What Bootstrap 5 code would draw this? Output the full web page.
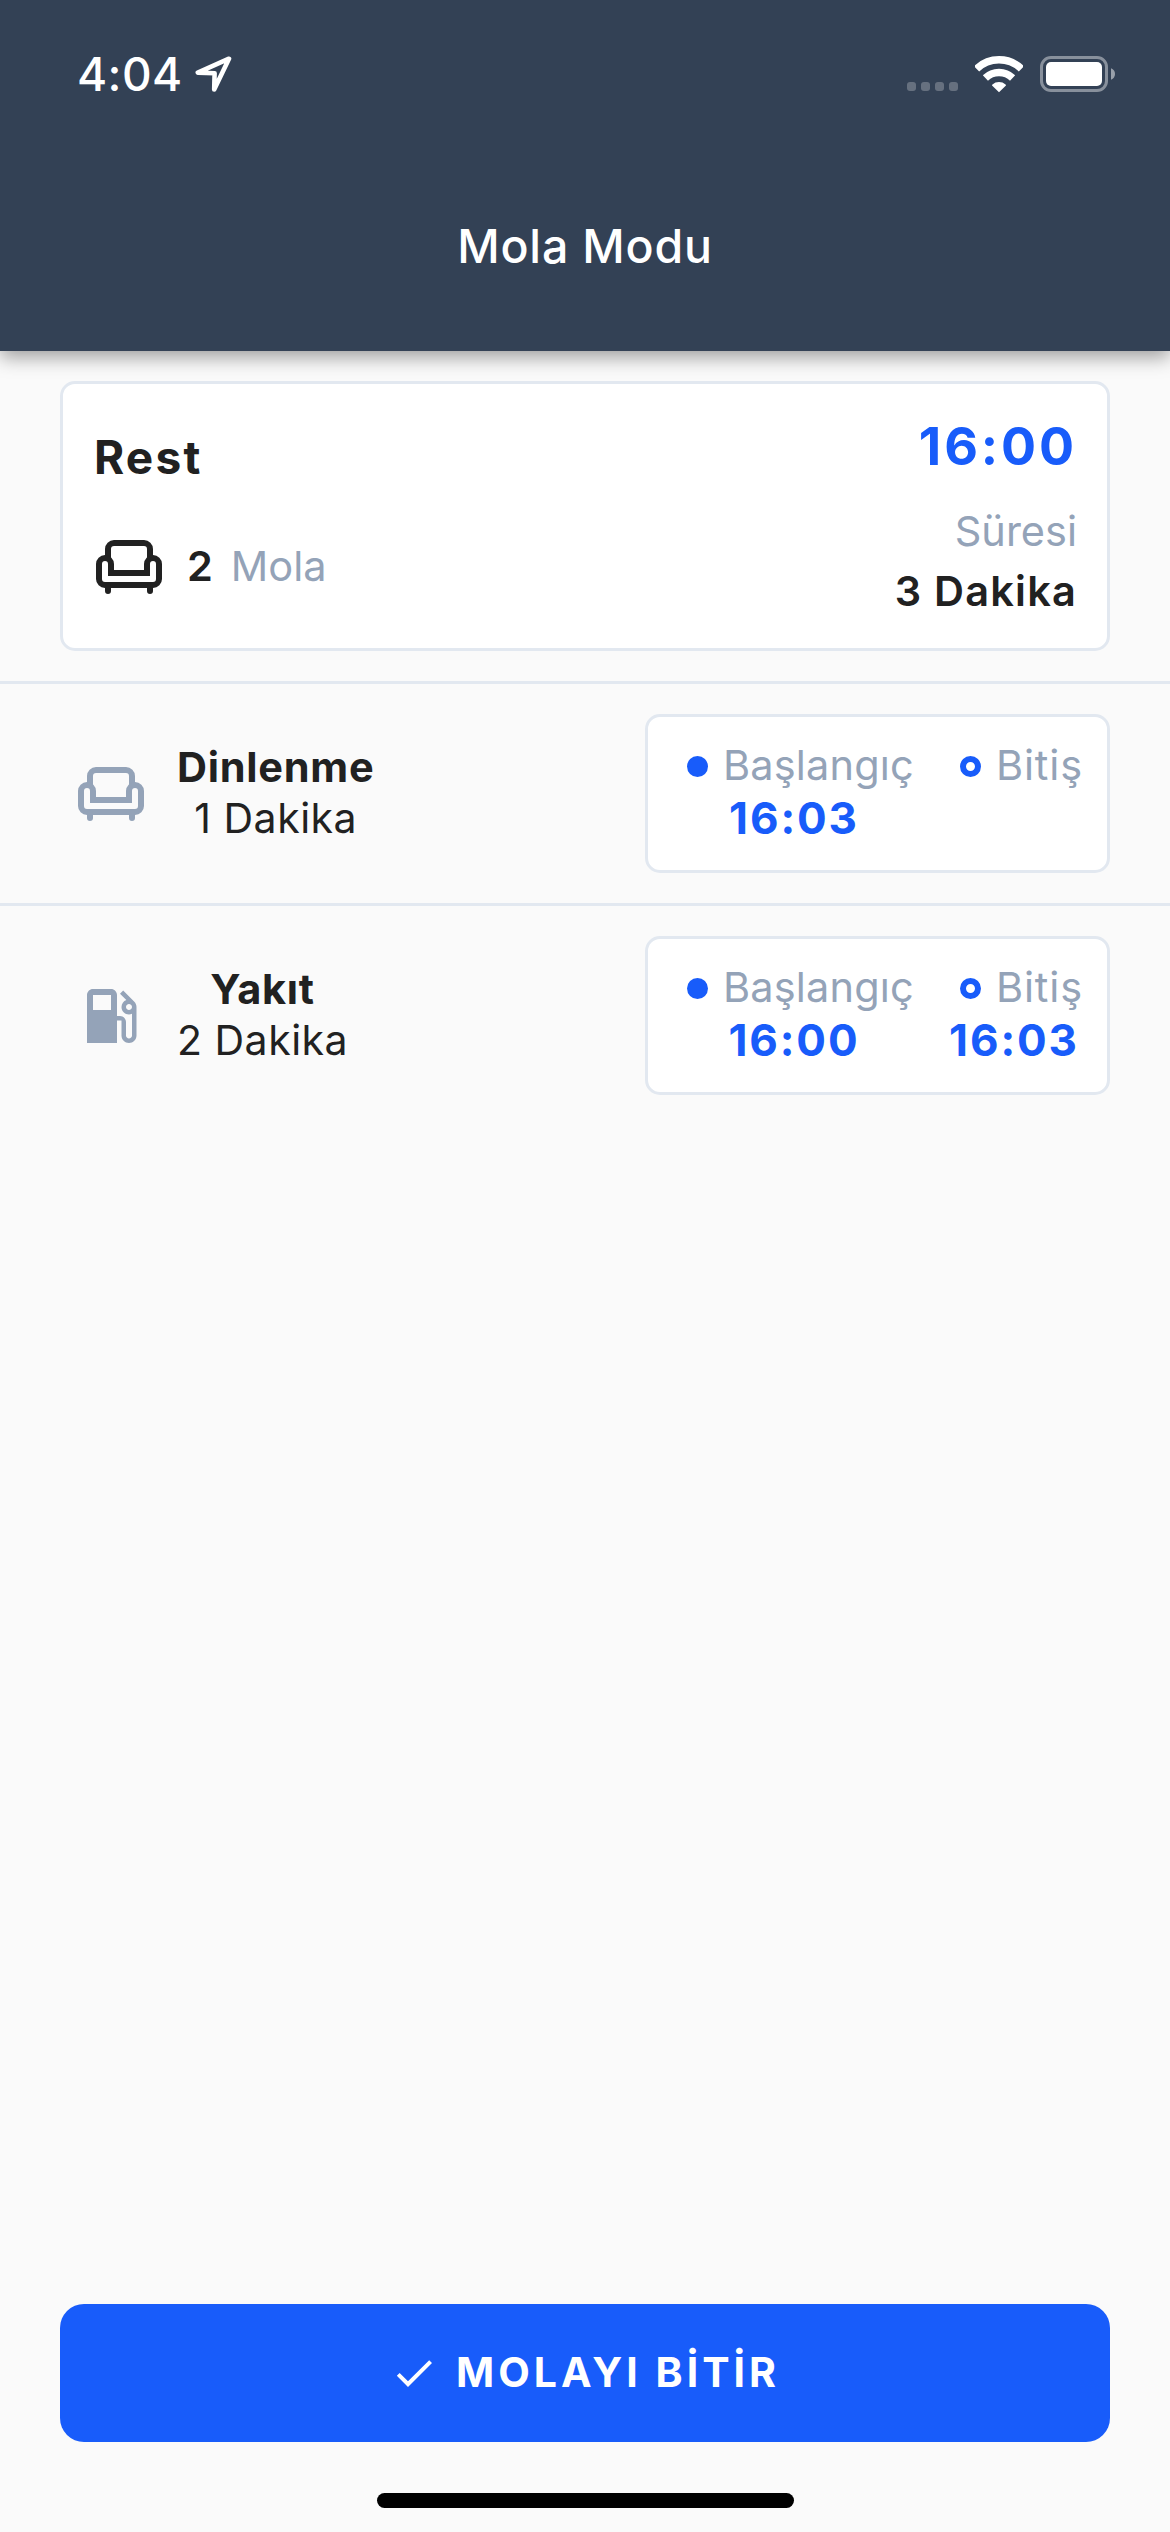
<!DOCTYPE html>
<html lang="tr">
<head>
<meta charset="utf-8">
<meta name="viewport" content="width=device-width, initial-scale=1">
<title>Mola Modu</title>
<link href="https://cdn.jsdelivr.net/npm/bootstrap@5.3.0/dist/css/bootstrap.min.css" rel="stylesheet">
<style>
  :root { --brand: #185cfa; --slate: #334155; --muted: #94a3b8; --line: #e2e8f0; --ink: #212121; }
  body { font-family: Inter, "Noto Sans", sans-serif; font-size: 41.5px; color: var(--ink); background: #fafafa; }
  .screen { height: 2532px; }
  svg { display: block; flex-shrink: 0; }
  .app-header { height: 351px; background: var(--slate); box-shadow: 0 6px 18px rgba(0, 0, 0, .38); }
  .status-bar { height: 148px; padding: 0 55px 0 77px; }
  .clock { font-size: 46px; font-weight: 500; letter-spacing: .4px; line-height: 56px; }
  .status-icons { gap: 17px; }
  .page-title { height: 198px; font-size: 46.5px; font-weight: 500; letter-spacing: .8px; }
  .text-muted-slate { color: var(--muted); }
  .text-brand { color: var(--brand); }
  .panel { background: #fff; border: 3px solid var(--line); border-radius: 15px; }
  .summary { height: 270px; margin: 30px 60px; padding: 0 30px; }
  .summary-name { margin-top: 45px; padding-left: 1px; font-size: 46px; font-weight: 700; letter-spacing: 2.2px; line-height: 56px; }
  .summary-count { margin-top: 46px; height: 72px; gap: 18px; }
  .summary-count svg { margin-right: 4px; }
  .summary-count span { padding-bottom: 2px; }
  .summary-time { margin: 31px 0 22px; font-size: 52px; font-weight: 700; letter-spacing: 2.9px; line-height: 64px; }
  .summary-side { line-height: 60px; }
  .summary-total { font-weight: 600; letter-spacing: 1.2px; }
  .break-row { height: 222px; border-top: 3px solid var(--line); padding: 0 60px 0 75px; }
  .break-info { gap: 30px; line-height: 51px; }
  .break-text { padding-bottom: 2px; }
  .break-name { font-weight: 700; letter-spacing: .75px; }
  .break-length { font-size: 41px; font-weight: 400; letter-spacing: .5px; }
  .times { width: 465px; height: 159px; gap: 31px; padding: 21px 0 0 26px; }
  .stamp-label { gap: 15px; padding-left: 13px; line-height: 54px; letter-spacing: .16px; }
  .stamp-label-end { padding-left: 15px; letter-spacing: .87px; }
  .stamp-time { font-size: 44px; font-weight: 700; letter-spacing: 1.9px; line-height: 53px; }
  .dot { width: 21px; height: 21px; margin-top: 3px; background: var(--brand); }
  .dot-ring { background: none; border: 6px solid var(--brand); }
  .finish { height: 138px; margin: 0 60px 51px; gap: 18px; border: 0; border-radius: 24px; background: var(--brand);
            font-size: 41px; font-weight: 700; letter-spacing: 4px; line-height: 50px; }
  .finish span { padding-bottom: 2px; }
  .home-bar { width: 417px; height: 15px; margin-bottom: 24px; background: #000; }
</style>
<script src="https://cdn.jsdelivr.net/npm/bootstrap@5.3.0/dist/js/bootstrap.bundle.min.js"></script>
</head>
<body>
<svg width="0" height="0" class="position-absolute" aria-hidden="true">
  <symbol id="sofa" viewBox="0 0 24 24">
    <g fill="none" stroke="currentColor" stroke-width="2">
      <path d="M5 9V6a2 2 0 0 1 2-2h10a2 2 0 0 1 2 2v3"/>
      <path d="M6 14v-3a2 2 0 0 0-4 0v5a2 2 0 0 0 2 2h16a2 2 0 0 0 2-2v-5a2 2 0 0 0-4 0v3z"/>
      <path stroke-linecap="round" d="M5 18.5V20M19 18.5V20"/>
    </g>
  </symbol>
</svg>

<div class="screen d-flex flex-column">
  <header class="app-header text-white flex-shrink-0">
    <div class="status-bar d-flex align-items-center justify-content-between">
      <div class="d-flex align-items-center gap-2">
        <span class="clock">4:04</span>
        <svg class="ms-1" width="37" height="36" viewBox="0 0 37 36"><path d="M34 2.7 2.8 16.6 19.6 17.2 19.2 33.4z" fill="none" stroke="#fff" stroke-width="4.6" stroke-linejoin="round"/></svg>
      </div>
      <div class="status-icons d-flex align-items-center">
        <svg width="51" height="36" fill="#fff" fill-opacity=".25"><rect y="26" width="9" height="9" rx="3"/><rect x="14" y="26" width="9" height="9" rx="3"/><rect x="28" y="26" width="9" height="9" rx="3"/><rect x="42" y="26" width="9" height="9" rx="3"/></svg>
        <svg width="48" height="38" viewBox="0 0 48 38"><g fill="none" stroke="#fff" stroke-width="7.4"><path d="M1.6 13.8a32.3 32.3 0 0 1 44.8 0"/><path d="M10.4 23a19.5 19.5 0 0 1 27.2 0"/></g><path d="M17.4 29.4a10.3 10.3 0 0 1 13.2 0q.8.6.1 1.3L24 37.2l-6.7-6.5q-.7-.7.1-1.3z" fill="#fff"/></svg>
        <svg width="75" height="36" viewBox="0 0 75 36"><rect x="1.5" y="1.5" width="65" height="33" rx="9.5" fill="none" stroke="#fff" stroke-opacity=".42" stroke-width="3"/><rect x="6" y="6" width="56" height="24" rx="5" fill="#fff"/><path d="M71 12.3q4 1.7 4 5.7t-4 5.7z" fill="#fff" fill-opacity=".5"/></svg>
      </div>
    </div>
    <h1 class="page-title d-flex align-items-center justify-content-center m-0">Mola Modu</h1>
  </header>

  <main class="flex-grow-1">
    <section class="summary panel d-flex justify-content-between">
      <div>
        <div class="summary-name">Rest</div>
        <div class="summary-count d-flex align-items-center">
          <svg width="72" height="72"><use href="#sofa"/></svg>
          <span class="fw-semibold">2</span>
          <span class="text-muted-slate">Mola</span>
        </div>
      </div>
      <div class="summary-side text-end">
        <div class="summary-time text-brand">16:00</div>
        <div class="text-muted-slate">Süresi</div>
        <div class="summary-total">3 Dakika</div>
      </div>
    </section>

    <section class="break-row d-flex align-items-center justify-content-between">
      <div class="break-info d-flex align-items-center">
        <svg class="text-muted-slate" width="72" height="72"><use href="#sofa"/></svg>
        <div class="break-text text-center">
          <div class="break-name">Dinlenme</div>
          <div class="break-length">1 Dakika</div>
        </div>
      </div>
      <div class="times panel d-flex">
        <div>
          <div class="stamp-label d-flex align-items-center text-muted-slate"><span class="dot rounded-circle"></span>Başlangıç</div>
          <div class="stamp-time text-brand text-center">16:03</div>
        </div>
        <div>
          <div class="stamp-label stamp-label-end d-flex align-items-center text-muted-slate"><span class="dot dot-ring rounded-circle"></span>Bitiş</div>
        </div>
      </div>
    </section>

    <section class="break-row d-flex align-items-center justify-content-between">
      <div class="break-info d-flex align-items-center">
        <svg class="text-muted-slate" width="72" height="72" viewBox="0 0 24 24" fill="currentColor"><path d="M19.77 7.23l.01-.01-3.72-3.72L15 4.56l2.11 2.11c-.94.36-1.61 1.26-1.61 2.33 0 1.38 1.12 2.5 2.5 2.5.36 0 .69-.08 1-.21v7.21c0 .55-.45 1-1 1s-1-.45-1-1V14c0-1.1-.9-2-2-2h-1V5c0-1.1-.9-2-2-2H6c-1.1 0-2 .9-2 2v16h10v-7.5h1.5v5c0 1.38 1.12 2.5 2.5 2.5s2.5-1.12 2.5-2.5V9c0-.69-.28-1.32-.73-1.77zM12 10H6V5h6v5zm6 0c-.55 0-1-.45-1-1s.45-1 1-1 1 .45 1 1-.45 1-1 1z"/></svg>
        <div class="break-text text-center">
          <div class="break-name">Yakıt</div>
          <div class="break-length">2 Dakika</div>
        </div>
      </div>
      <div class="times panel d-flex">
        <div>
          <div class="stamp-label d-flex align-items-center text-muted-slate"><span class="dot rounded-circle"></span>Başlangıç</div>
          <div class="stamp-time text-brand text-center">16:00</div>
        </div>
        <div>
          <div class="stamp-label stamp-label-end d-flex align-items-center text-muted-slate"><span class="dot dot-ring rounded-circle"></span>Bitiş</div>
          <div class="stamp-time text-brand text-center">16:03</div>
        </div>
      </div>
    </section>
  </main>

  <button type="button" class="finish btn btn-primary d-flex align-items-center justify-content-center p-0 flex-shrink-0">
    <svg width="48" height="48" viewBox="0 0 24 24" fill="#fff"><path d="M9 16.17 4.83 12l-1.42 1.41L9 19 21 7l-1.41-1.41z"/></svg>
    <span>MOLAYI BİTİR</span>
  </button>
  <div class="home-bar rounded-pill mx-auto flex-shrink-0"></div>
</div>
</body>
</html>
